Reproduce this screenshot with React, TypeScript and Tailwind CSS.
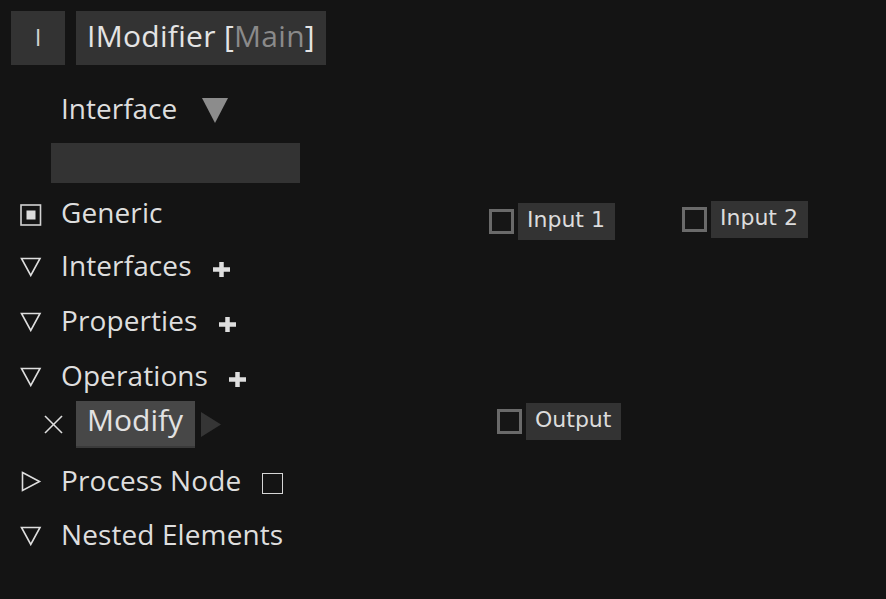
import React from "react";

const TXT = "#dedede";

function DownTri() {
  return (
    <svg width="22" height="20" viewBox="0 0 22 20" className="mt-[4px]">
      <polygon points="1.5,1.5 20,1.5 10.75,18.5" fill="none" stroke={TXT} strokeWidth="1.6" strokeLinejoin="miter" />
    </svg>
  );
}

function RightTri() {
  return (
    <svg width="22" height="21" viewBox="0 0 22 21" className="mt-[3px]">
      <polygon points="2.5,1.5 19.5,10.5 2.5,19.5" fill="none" stroke={TXT} strokeWidth="1.6" />
    </svg>
  );
}

function Plus() {
  return (
    <svg width="17" height="15" viewBox="0 0 17 15" className="self-end mb-[8px] ml-[21px]">
      <line x1="0" y1="7.5" x2="17" y2="7.5" stroke={TXT} strokeWidth="4.5" />
      <line x1="8.5" y1="0" x2="8.5" y2="15" stroke={TXT} strokeWidth="4.5" />
    </svg>
  );
}

function Row({
  icon,
  label,
  className = "",
  children,
}: {
  icon: React.ReactNode;
  label: string;
  className?: string;
  children?: React.ReactNode;
}) {
  return (
    <div className={"flex h-[40px] items-center pl-[20px] " + className}>
      <div className="flex w-[22px] items-center justify-start">{icon}</div>
      <span className="ml-[19px] text-[28px] leading-none tracking-[0.1px]" style={{ color: TXT }}>
        {label}
      </span>
      {children}
    </div>
  );
}

function Pin({ label, className }: { label: string; className: string }) {
  return (
    <div className={"absolute flex items-start " + className}>
      <div className="mt-[6px] h-[25px] w-[25px] border-[3px] border-[#6a6a6a] bg-[#161616]" />
      <div
        className="ml-[4px] flex h-[37px] items-center bg-[#333333] pl-[9px] pr-[10px] pb-[4px] text-[22px] leading-none text-[#dcdcdc]"
        style={{ fontFamily: '"DejaVu Sans", Verdana, sans-serif' }}
      >
        {label}
      </div>
    </div>
  );
}

export default function App() {
  return (
    <div
      className="relative h-[599px] w-[886px] overflow-hidden bg-[#141414]"
      style={{ fontFamily: '"Open Sans", "Noto Sans", sans-serif' }}
    >
      {/* header */}
      <div className="flex gap-[11px] pl-[11px] pt-[11px]">
        <div className="flex h-[54px] w-[54px] items-center justify-center bg-[#333333] pb-[2px] text-[24px] leading-none text-[#cfcfcf]">
          I
        </div>
        <div className="flex h-[54px] w-[250px] items-center bg-[#333333] pb-[5px] pl-[11px] text-[30px] leading-none tracking-[0.3px] text-[#e4e4e4]">
          <span>IModifier&nbsp;[</span>
          <span className="text-[#8a8a8a]">Main</span>
          <span>]</span>
        </div>
      </div>

      {/* interface selector */}
      <div className="mt-[23px] flex h-[40px] items-center pl-[61px]">
        <span className="text-[28px] leading-none" style={{ color: TXT }}>
          Interface
        </span>
        <svg width="26" height="25" viewBox="0 0 26 25" className="ml-[25px] mt-[5px]">
          <polygon points="0,0 26,0 13,25" fill="#8c8c8c" />
        </svg>
      </div>
      <div className="ml-[51px] mt-[15px] h-[40px] w-[249px] bg-[#333333]" />

      {/* tree */}
      <Row
        className="mt-[9px]"
        label="Generic"
        icon={
          <svg width="22" height="22" viewBox="0 0 22 22" className="mt-[5px]">
            <rect x="1" y="1" width="19.5" height="20" fill="none" stroke="#d2d2d2" strokeWidth="1.6" />
            <rect x="6.5" y="6.5" width="9" height="9" fill="#dcdcdc" />
          </svg>
        }
      />
      <Row className="mt-[13px]" label="Interfaces" icon={<DownTri />}>
        <Plus />
      </Row>
      <Row className="mt-[15px]" label="Properties" icon={<DownTri />}>
        <Plus />
      </Row>
      <Row className="mt-[15px]" label="Operations" icon={<DownTri />}>
        <Plus />
      </Row>

      {/* operation item */}
      <div className="mt-[6px] flex h-[47px] items-center pl-[44px]">
        <svg width="19" height="19" viewBox="0 0 19 19">
          <line x1="1" y1="1" x2="18" y2="18" stroke={TXT} strokeWidth="1.6" />
          <line x1="18" y1="1" x2="1" y2="18" stroke={TXT} strokeWidth="1.6" />
        </svg>
        <div className="ml-[13px] h-[47px] w-[119px] border-b-2 border-[#3a3a3a] bg-[#474747] pl-[11px] pt-[4px] text-[30px] leading-[30px] text-[#e2e2e2]">
          Modify
        </div>
        <svg width="20" height="25" viewBox="0 0 20 25" className="ml-[6px]">
          <polygon points="0,0 20,12.5 0,25" fill="#353535" />
        </svg>
      </div>

      <Row className="mt-[12px]" label="Process Node" icon={<RightTri />}>
        <div className="ml-[21px] mt-[6px] h-[21px] w-[21px] border-[1.6px] border-[#d6d6d6]" />
      </Row>
      <Row className="mt-[14px]" label="Nested Elements" icon={<DownTri />} />

      {/* pins */}
      <Pin label="Input 1" className="left-[489px] top-[203px]" />
      <Pin label="Input 2" className="left-[682px] top-[201px]" />
      <Pin label="Output" className="left-[497px] top-[403px]" />
    </div>
  );
}
